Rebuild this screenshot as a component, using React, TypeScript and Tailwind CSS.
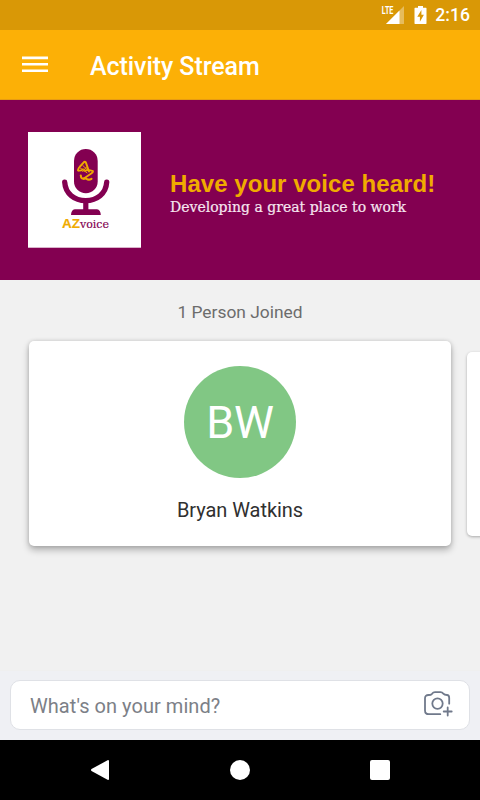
import React from "react";

function StatusBar() {
  return (
    <div className="flex h-[30px] items-center justify-end bg-[#d99806] pr-[10px] text-white">
      <svg className="mr-[9px]" width="24" height="30" viewBox="0 0 24 30" aria-label="LTE">
        <path d="M23 6V24H5Z" fill="#fff" fillOpacity=".35" />
        <path d="M18.5 10.5V24H5Z" fill="#fff" />
        <text x="0.8" y="14" fill="#fff" fontSize="10.5" fontWeight="700" fontFamily="Roboto, sans-serif" textLength="11.6" lengthAdjust="spacingAndGlyphs">LTE</text>
      </svg>
      <svg className="mr-2" width="13" height="30" viewBox="0 0 13 30">
        <path fillRule="evenodd" d="M4 6H9V7.8H12Q12.5 7.8 12.5 8.5V23.3Q12.5 24 12 24H1Q.5 24 .5 23.3V8.5Q.5 7.8 1 7.8H4ZM7.4 10L3.3 16.8H5.9V21.8L9.9 14.8H7.4Z" fill="#fff" />
      </svg>
      <span className="relative top-px text-[17.6px] leading-none font-medium">2:16</span>
    </div>
  );
}

function AppBar() {
  return (
    <header className="flex h-[70px] items-center bg-[#fcb006] pl-[22px] shadow-[inset_0_-1px_0_#e79c13]">
      <svg width="26" height="20" viewBox="0 0 26 20">
        <path d="M0 2.9H26M0 9.3H26M0 15.7H26" stroke="#fff" strokeWidth="2.6" />
      </svg>
      <h1 className="ml-[42px] pt-[4px] text-[25px] leading-8 font-medium tracking-[-0.06px] text-white">Activity Stream</h1>
    </header>
  );
}

function Logo() {
  return (
    <svg className="mt-8 ml-7 shrink-0" width="113" height="116" viewBox="0 0 113 116">
      <rect width="113" height="115.7" fill="#fff" />
      <rect x="46" y="17" width="23.7" height="44.3" rx="11.8" fill="#830051" />
      <path d="M36.7 50.2C37.4 61.8 46.5 68.6 57.7 68.6S78 61.8 78.7 50.2" fill="none" stroke="#830051" strokeWidth="5.3" strokeLinecap="round" />
      <path d="M55.2 69H60.4V77.2H69Q72.6 77.8 72.8 83H43Q43.2 77.8 46.8 77.2H55.2Z" fill="#830051" />
      <g fill="none" stroke="#f0ab00" strokeLinecap="round" strokeLinejoin="round">
        <path d="M50.2 38.4C49.5 37.5 50.8 36 52 34.5L56.2 29.9Q57.4 29.2 58 30.9L61 39.5" strokeWidth="1.9" />
        <path d="M50.2 38.4Q53.5 39.2 55 37.2M57 38.8Q60 37.2 65 39.2Q65.3 40 62.5 42L55.5 46.8" strokeWidth="1.8" />
        <path d="M52.3 36L59 40.8M54.8 33.5L60 38.5M54.7 39.7L58.5 35" strokeWidth="1" />
        <path d="M52.8 43.5C53 48.8 56.8 45.6 58.5 46.8S61.5 48 63.5 46.8" strokeWidth="2.1" />
      </g>
      <text x="34" y="96.3" fontFamily="Liberation Sans, Arial, sans-serif" fontWeight="700" fontSize="12.7" fill="#f0ab00" stroke="#f0ab00" strokeWidth=".2" textLength="18" lengthAdjust="spacingAndGlyphs">AZ</text>
      <text x="52" y="96.3" fontFamily="DejaVu Serif, serif" fontSize="10.6" fill="#830051" stroke="#830051" strokeWidth=".15" textLength="29" lengthAdjust="spacingAndGlyphs">voice</text>
    </svg>
  );
}

function Banner() {
  return (
    <section className="flex h-[180px] bg-[#830051]">
      <Logo />
      <div className="ml-[29px] pt-[70px] whitespace-nowrap">
        <p className="font-['Liberation_Sans',Arial,sans-serif] text-[24px] leading-[28px] font-bold tracking-[0.05px] text-[#f0ab00]">Have your voice heard!</p>
        <p className="-mt-px font-['DejaVu_Serif',serif] text-[14px] leading-5 text-[#f6e6f0] [-webkit-text-stroke:0.2px_#f6e6f0]">Developing a great place to work</p>
      </div>
    </section>
  );
}

function PersonCard() {
  return (
    <article className="flex h-[205px] w-[422px] shrink-0 flex-col items-center rounded-[5px] bg-white pt-[25px] shadow-[0_4px_7px_rgba(0,0,0,0.27),0_0_4px_rgba(0,0,0,0.14)]">
      <div className="flex h-[112px] w-[112px] items-center justify-center rounded-full bg-[#81c784] pt-[1px] text-[45px] leading-none tracking-[-0.2px] text-white">BW</div>
      <p className="mt-[18px] text-[20px] leading-7 tracking-[-0.05px] text-[#303030]">Bryan Watkins</p>
    </article>
  );
}

function Composer() {
  return (
    <div className="h-[70px] bg-[#eff0f4] p-[10px] shadow-[inset_0_1px_0_#efefef]">
      <div className="flex h-[50px] items-center justify-between rounded-[10px] border border-[#dfe1e6] bg-white pr-4 pl-[19px]">
        <span className="pt-[2px] text-[20px] leading-none tracking-[0.05px] text-[#7c8087]">What's on your mind?</span>
        <svg className="mb-[3px]" width="30" height="28" viewBox="0 0 30 28" fill="none" stroke="#70798b" strokeWidth="1.8" strokeLinecap="round" strokeLinejoin="round">
          <path d="M17.3 24.2H5.8Q2 24.2 2 20.4V8.3Q2 5 5.5 5Q8 5 9 3.8Q10.2 2.2 12 2.2H17.5Q19.2 2.2 20.3 3.6Q21.4 5 24 5Q26.2 5 26.2 8V13.7" />
          <circle cx="14.5" cy="13.6" r="5.2" />
          <path d="M24.7 17.5V25.5M20.7 21.5H28.7" />
        </svg>
      </div>
    </div>
  );
}

function NavigationBar() {
  return (
    <nav className="flex h-[60px] items-center justify-center gap-[120px] bg-black">
      <svg width="20" height="20" viewBox="0 0 20 20"><path d="M18 0Q19 0 19 1V19Q19 20 18 19.9L1.5 10.9Q.5 10 1.5 9.1Z" fill="#fff" /></svg>
      <i className="h-5 w-5 rounded-full bg-white" />
      <i className="h-5 w-5 rounded-[2px] bg-white" />
    </nav>
  );
}

export default function App() {
  return (
    <div className="flex h-[800px] w-[480px] flex-col overflow-hidden bg-[#f1f1f1] font-['Roboto',sans-serif]">
      <StatusBar />
      <AppBar />
      <Banner />
      <main className="min-h-0 flex-1 overflow-hidden">
        <h2 className="pt-[20px] text-center text-[17.4px] leading-6 text-[#6c6c6c]">1 Person Joined</h2>
        <div className="mt-[17px] flex items-center gap-4 pl-[29px]">
          <PersonCard />
          <div className="h-[184px] w-[380px] shrink-0 rounded-[5px] bg-white shadow-[0_1px_3px_rgba(0,0,0,0.3)]" />
        </div>
      </main>
      <Composer />
      <NavigationBar />
    </div>
  );
}
